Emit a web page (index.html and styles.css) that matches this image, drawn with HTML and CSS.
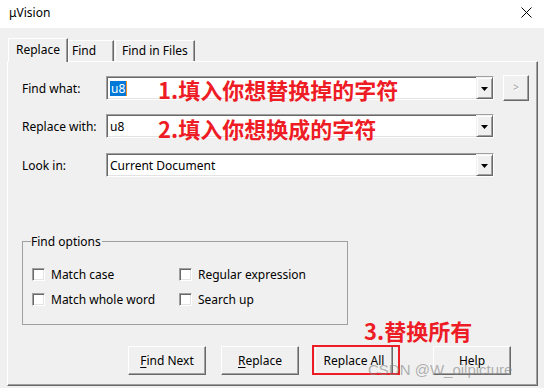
FILE: index.html
```html
<!DOCTYPE html>
<html>
<head>
<meta charset="utf-8">
<title>μVision</title>
<link rel="stylesheet" href="styles.css">
</head>
<body>
<div class="window">
  <div class="titlebar">
    <span class="title">μVision</span>
    <svg class="close" width="11" height="11" viewBox="0 0 11 11"><path d="M0.5 0.5L10.5 10.5M10.5 0.5L0.5 10.5" stroke="#000" stroke-width="1" fill="none"/></svg>
  </div>
  <div class="main">
    <div class="tabs">
      <div class="tab t-replace active">Replace</div>
      <div class="tab t-find">Find</div>
      <div class="tab t-files">Find in Files</div>
    </div>
    <div class="panel">
      <div class="row">
        <span class="lbl">Find what:</span>
        <div class="combo">
          <span class="value"><span class="sel">u8</span><span class="caret"></span></span>
          <span class="drop"><svg width="7" height="4" viewBox="0 0 7 4"><path d="M0 0H7L3.5 4Z" fill="#000"/></svg></span>
        </div>
        <button class="small">&gt;</button>
      </div>
      <div class="row r2">
        <span class="lbl">Replace with:</span>
        <div class="combo">
          <span class="value">u8</span>
          <span class="drop"><svg width="7" height="4" viewBox="0 0 7 4"><path d="M0 0H7L3.5 4Z" fill="#000"/></svg></span>
        </div>
      </div>
      <div class="row r3">
        <span class="lbl">Look in:</span>
        <div class="combo">
          <span class="value">Current Document</span>
          <span class="drop"><svg width="7" height="4" viewBox="0 0 7 4"><path d="M0 0H7L3.5 4Z" fill="#000"/></svg></span>
        </div>
      </div>
      <fieldset class="group">
        <legend>Find options</legend>
        <div class="checks">
          <label class="check"><span class="box"></span>Match case</label>
          <label class="check"><span class="box"></span>Regular expression</label>
          <label class="check"><span class="box"></span>Match whole word</label>
          <label class="check"><span class="box"></span>Search up</label>
        </div>
      </fieldset>
      <div class="buttons">
        <button class="btn b-next"><u>F</u>ind Next</button>
        <button class="btn b-replace"><u>R</u>eplace</button>
        <button class="btn b-all">Replace All</button>
        <button class="btn b-help">Help</button>
      </div>
    </div>
  </div>
  <div class="note n1">1.填入你想替换掉的字符</div>
  <div class="note n2">2.填入你想换成的字符</div>
  <div class="note n3">3.替换所有</div>
  <div class="mark"></div>
  <div class="wm">CSDN @W_oilpicture</div>
</div>
</body>
</html>
```

FILE: styles.css
```css
* { box-sizing: border-box; }
html, body { margin: 0; padding: 0; }
body {
  width: 544px; height: 388px; overflow: hidden;
  background: #f0f0f0;
  font-family: "Noto Sans", "Noto Sans CJK SC", sans-serif;
  font-size: 12px; color: #000;
}
.window { position: relative; width: 544px; height: 388px; }

.titlebar {
  height: 28px; background: #fff;
  display: flex; align-items: center; justify-content: space-between;
  padding: 0 12px 3px 9px;
}
.title { font-size: 12px; line-height: 16px; }
.close { display: block; }

.main { padding: 10px 6px 0 7px; }

.tabs { display: flex; align-items: flex-end; height: 23px; padding-left: 1px; }
.tab {
  height: 21px; line-height: 16px;
  display: flex; align-items: center;
  border-top: 1px solid #fff; border-left: 1px solid #fff;
  border-right: 1px solid #696969;
  box-shadow: inset -1px 0 #a0a0a0;
}
.tab.active {
  height: 24px; margin-bottom: -1px; background: #f0f0f0;
  position: relative; z-index: 1; padding-bottom: 2px;
}
.t-replace { width: 60px; padding-left: 7px; }
.t-find { width: 46px; padding-left: 3px; }
.t-files { width: 80px; padding-left: 6px; margin-left: 1px; }

.panel {
  height: 325px;
  border-top: 1px solid #fff; border-left: 1px solid #fff;
  border-right: 1px solid #696969; border-bottom: 1px solid #696969;
  box-shadow: inset -1px -1px #a0a0a0;
  padding: 13px 0 0 14px;
}

.row {
  display: grid; grid-template-columns: 84px 388px 35px;
  align-items: center; height: 26px;
}
.r2 { margin-top: 12px; }
.r3 { margin-top: 13px; }
.lbl { line-height: 16px; padding-top: 1px; }

.combo {
  height: 24px; display: flex; background: #fff;
  border: 1px solid; border-color: #a0a0a0 #fff #fff #a0a0a0;
  box-shadow: inset 1px 1px #696969, inset -1px -1px #e3e3e3;
}
.value { flex: 1; display: flex; align-items: center; padding-left: 3px; line-height: 15px; }
.sel { background: #0078d7; color: #fff; padding: 0 1px; height: 15px; }
.caret { width: 1px; height: 15px; background: #f0902a; }
.drop {
  width: 17px; height: 22px; background: #f0f0f0;
  display: flex; align-items: center; justify-content: center;
  border: 1px solid; border-color: #f0f0f0 #696969 #696969 #f0f0f0;
  box-shadow: inset 1px 1px #fff, inset -1px -1px #a0a0a0;
  padding-top: 1px;
}
.drop svg { display: block; }

.small {
  width: 26px; height: 26px; padding: 0 0 2px 0; margin: 0 0 0 9px;
  background: #f0f0f0; font: 10px "Noto Sans", sans-serif;
  color: #a0a0a0; text-shadow: 1px 1px #fff;
  border: 1px solid; border-color: #fff #696969 #696969 #fff;
  box-shadow: inset -1px -1px #a0a0a0;
}

.group {
  margin: 55px 0 0 0; width: 326px; min-width: 0;
  padding: 0 0 16px 9px;
  border: 1px solid #a0a0a0;
}
.group legend { padding: 0 1px 0 0; margin-left: -1px; line-height: 17px; font-size: 12px; }
.checks {
  display: grid; grid-template-columns: 147px auto; row-gap: 8px;
  margin-top: 16px;
}
.check { display: flex; align-items: center; height: 17px; line-height: 16px; }
.box {
  width: 13px; height: 13px; margin-right: 6px; background: #fff; flex: none;
  border: 1px solid; border-color: #a0a0a0 #fff #fff #a0a0a0;
  box-shadow: inset 1px 1px #696969, inset -1px -1px #e3e3e3;
}

.buttons { display: flex; margin-top: 21px; padding-left: 106px; }
.btn {
  width: 78px; height: 29px; padding: 0; margin: 0;
  background: #f0f0f0; color: #000;
  font: 12px "Noto Sans", sans-serif; line-height: 16px;
  border: 1px solid; border-color: #fff #696969 #696969 #fff;
  box-shadow: inset -1px -1px #a0a0a0;
}
.btn u { text-decoration-thickness: 1px; text-underline-offset: 2px; }
.b-replace { margin-left: 15px; }
.b-all { margin-left: 16px; }
.b-help { margin-left: 40px; }

.note {
  position: absolute; white-space: nowrap;
  font-family: "Noto Sans CJK SC", sans-serif; font-weight: 700;
  font-size: 22px; line-height: 22px; color: #ee1c25;
}
.n1 { left: 158px; top: 78px; }
.n2 { left: 158px; top: 117px; }
.n3 { left: 364px; top: 319px; }
.mark {
  position: absolute; left: 312px; top: 345px; width: 88px; height: 30px;
  border: 2px solid #ee1c25;
}
.wm {
  position: absolute; left: 368px; top: 361px;
  font-family: "Liberation Sans", sans-serif; font-size: 15px; line-height: 18px;
  color: rgba(130, 130, 130, 0.6); white-space: nowrap;
}
```
